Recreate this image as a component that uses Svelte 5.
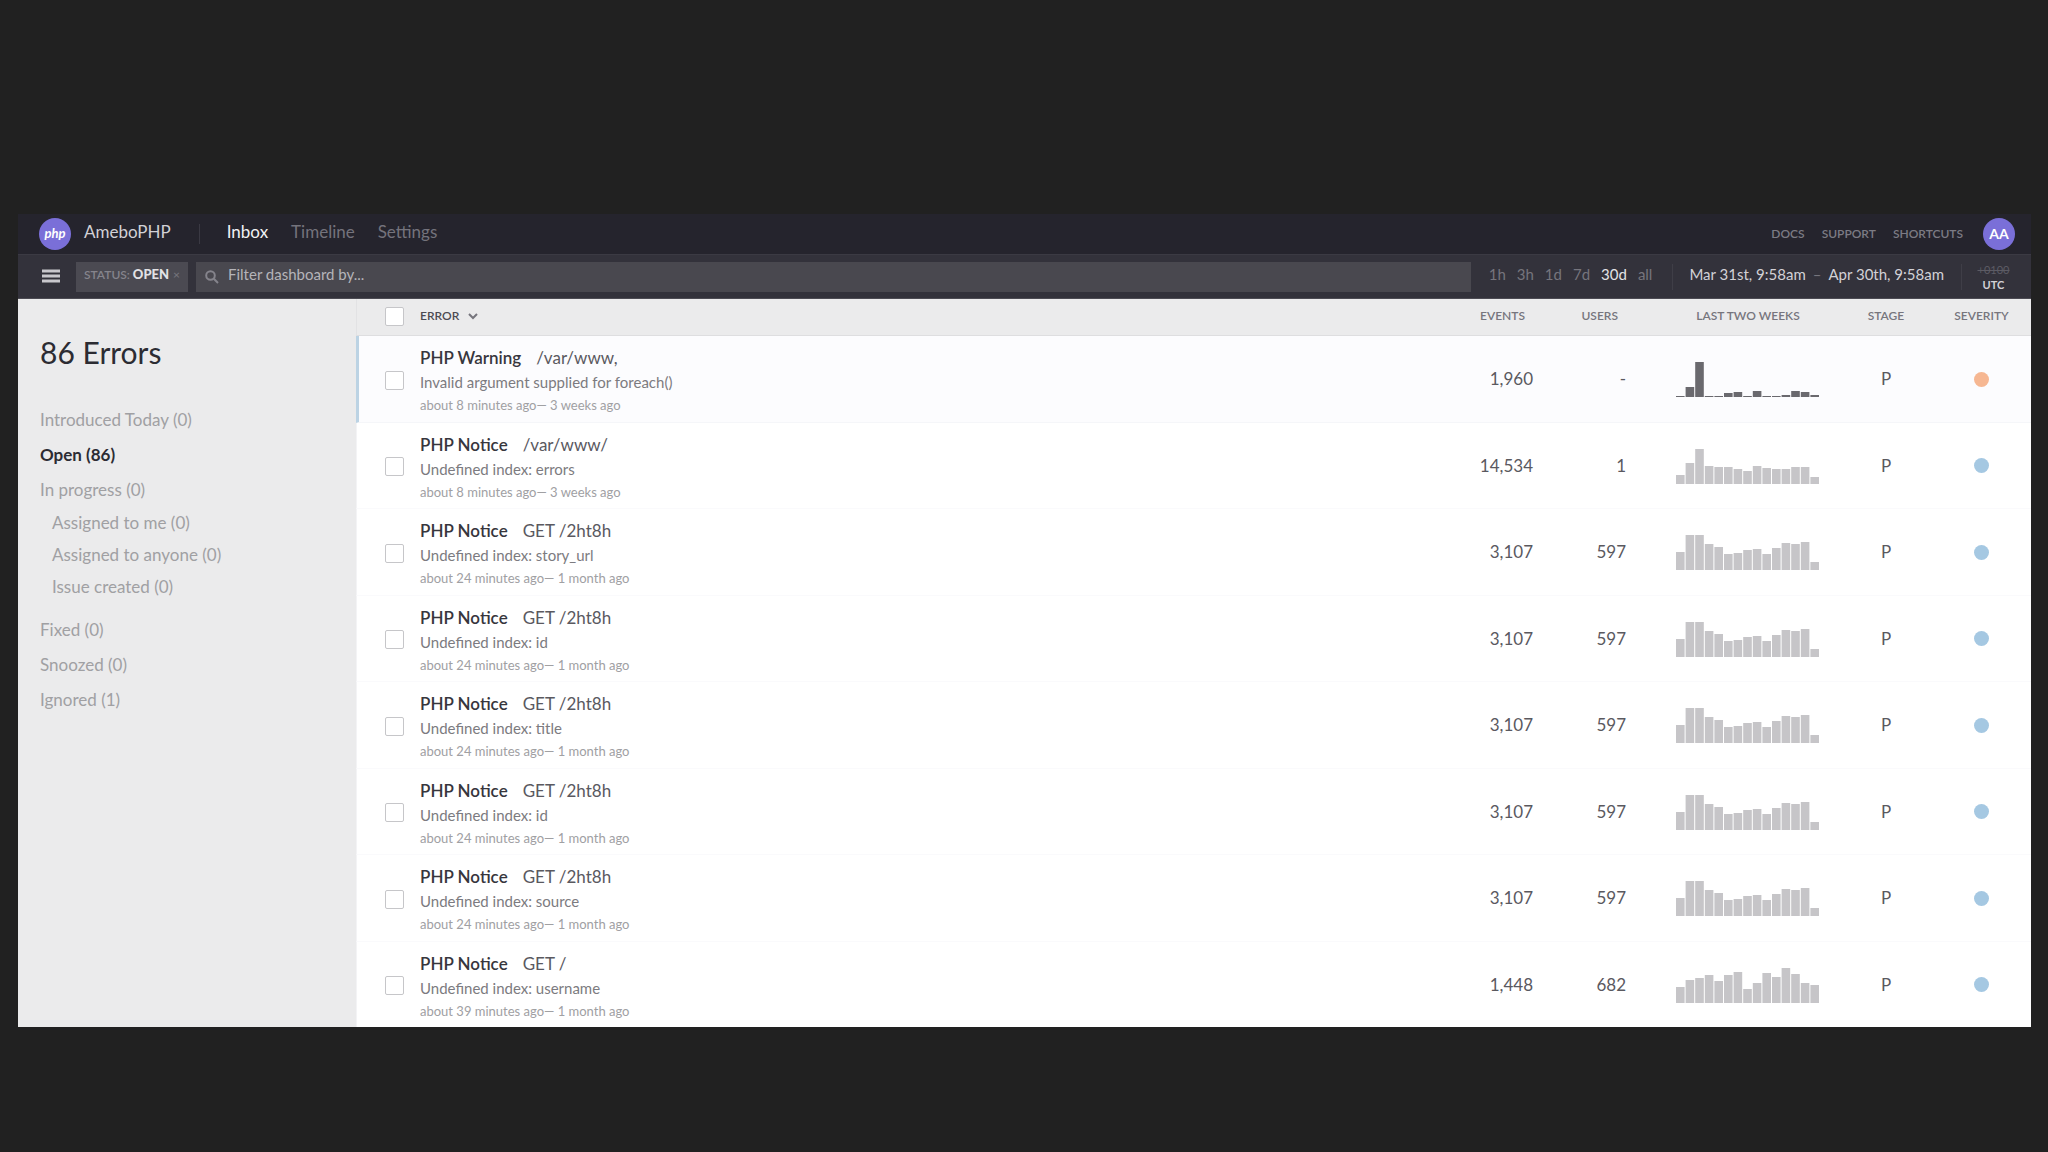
<script lang="ts">
	interface ErrorRow {
		kind: string;
		context: string;
		message: string;
		seen: string;
		events: string;
		users: string;
		bars: number[];
		severity: 'warning' | 'info';
		selected?: boolean;
	}

	const CHART_HEIGHT = 36;
	const BAR_STEP = 9.6;

	const shared = [18, 35, 35, 26, 23, 16, 17, 20, 21, 16, 22, 27, 26, 28, 8];

	const notice = (context: string, message: string, minutes: number): ErrorRow => ({
		kind: 'PHP Notice',
		context,
		message: `Undefined index: ${message}`,
		seen: `about ${minutes} minutes ago— 1 month ago`,
		events: '3,107',
		users: '597',
		bars: shared,
		severity: 'info'
	});

	const rows: ErrorRow[] = [
		{
			kind: 'PHP Warning',
			context: '/var/www,',
			message: 'Invalid argument supplied for foreach()',
			seen: 'about 8 minutes ago— 3 weeks ago',
			events: '1,960',
			users: '-',
			bars: [1, 10, 35, 1, 1, 4, 5, 1, 6, 1, 1, 2, 6, 5, 2],
			severity: 'warning',
			selected: true
		},
		{
			...notice('/var/www/', 'errors', 8),
			seen: 'about 8 minutes ago— 3 weeks ago',
			events: '14,534',
			users: '1',
			bars: [9, 21, 35, 18, 17, 17, 15, 13, 18, 16, 15, 15, 17, 17, 7]
		},
		notice('GET /2ht8h', 'story_url', 24),
		notice('GET /2ht8h', 'id', 24),
		notice('GET /2ht8h', 'title', 24),
		notice('GET /2ht8h', 'id', 24),
		notice('GET /2ht8h', 'source', 24),
		{
			...notice('GET /', 'username', 39),
			events: '1,448',
			users: '682',
			bars: [16, 23, 25, 28, 22, 28, 31, 14, 20, 30, 26, 35, 29, 20, 18]
		}
	];

	const ranges = ['1h', '3h', '1d', '7d', '30d', 'all'];
	let range = $state('30d');
	let filter = $state('');
</script>

{#snippet chart(bars: number[])}
	<svg class="chart" viewBox="0 0 144 36" aria-hidden="true">
		{#each bars as bar, i}
			<rect x={i * BAR_STEP} y={CHART_HEIGHT - bar} width="8.6" height={bar} />
		{/each}
	</svg>
{/snippet}

<div class="page">
	<div class="app">
		<header class="topbar">
			<a class="project" href="#project">
				<svg class="logo" viewBox="0 0 32 32" aria-hidden="true">
					<circle cx="16" cy="16" r="16" />
					<text x="16" y="20" text-anchor="middle">php</text>
				</svg>
				<span>AmeboPHP</span>
			</a>
			<nav class="tabs">
				<a class="active" href="#inbox">Inbox</a>
				<a href="#timeline">Timeline</a>
				<a href="#settings">Settings</a>
			</nav>
			<nav class="help">
				<a href="#docs">DOCS</a>
				<a href="#support">SUPPORT</a>
				<a href="#shortcuts">SHORTCUTS</a>
			</nav>
			<button class="avatar">AA</button>
		</header>

		<div class="toolbar">
			<button class="menu" aria-label="Menu">
				<svg viewBox="0 0 18 14"><path d="M0 2h18M0 7h18M0 12h18" /></svg>
			</button>
			<button class="chip">STATUS: <b>OPEN</b> <span class="remove">×</span></button>
			<label class="search">
				<svg viewBox="0 0 14 14" aria-hidden="true">
					<circle cx="5.5" cy="5.5" r="4.3" />
					<path d="M8.8 8.8 13 13" />
				</svg>
				<input type="text" placeholder="Filter dashboard by..." aria-label="Filter dashboard" bind:value={filter} />
			</label>
			<div class="ranges">
				{#each ranges as r}
					<button class:active={r === range} onclick={() => (range = r)}>{r}</button>
				{/each}
			</div>
			<div class="dates">
				<button>Mar 31st, 9:58am</button>
				<span>–</span>
				<button>Apr 30th, 9:58am</button>
			</div>
			<div class="zone">
				<button class="offset">+0100</button>
				<button class="current">UTC</button>
			</div>
		</div>

		<div class="body">
			<aside class="sidebar">
				<h1>86 Errors</h1>
				<ul>
					<li><a href="#today">Introduced Today (0)</a></li>
					<li><a class="active" href="#open">Open (86)</a></li>
					<li>
						<a href="#progress">In progress (0)</a>
						<ul>
							<li><a href="#me">Assigned to me (0)</a></li>
							<li><a href="#anyone">Assigned to anyone (0)</a></li>
							<li><a href="#issue">Issue created (0)</a></li>
						</ul>
					</li>
					<li><a href="#fixed">Fixed (0)</a></li>
					<li><a href="#snoozed">Snoozed (0)</a></li>
					<li><a href="#ignored">Ignored (1)</a></li>
				</ul>
			</aside>

			<main>
				<table>
					<thead>
						<tr>
							<th class="check"><input type="checkbox" aria-label="Select all errors" /></th>
							<th class="error">
								<button>
									ERROR
									<svg viewBox="0 0 10 7" aria-hidden="true"><path d="M1 1l4 4 4-4" /></svg>
								</button>
							</th>
							<th class="events">EVENTS</th>
							<th class="users">USERS</th>
							<th class="weeks">LAST TWO WEEKS</th>
							<th class="stage">STAGE</th>
							<th class="severity">SEVERITY</th>
						</tr>
					</thead>
					<tbody>
						{#each rows as row}
							<tr class:selected={row.selected}>
								<td class="check"><input type="checkbox" aria-label={row.message} /></td>
								<td class="error">
									<div class="title"><a href="#error">{row.kind}</a><span>{row.context}</span></div>
									<div class="message">{row.message}</div>
									<div class="seen">{row.seen}</div>
								</td>
								<td class="events">{row.events}</td>
								<td class="users">{row.users}</td>
								<td class="weeks">{@render chart(row.bars)}</td>
								<td class="stage">P</td>
								<td class="severity"><i class="dot {row.severity}"></i></td>
							</tr>
						{/each}
					</tbody>
				</table>
			</main>
		</div>
	</div>
</div>

<style>
	:global(body) {
		background: #212121;
	}

	.page {
		box-sizing: border-box;
		height: 100vh;
		padding: 214px 17px 125px 18px;
		display: flex;
		font-family: Lato, 'Liberation Sans', sans-serif;
		font-size: 16px;
		line-height: 20px;
	}

	.app {
		flex: 1;
		min-width: 0;
		display: flex;
		flex-direction: column;
		overflow: hidden;
	}

	a {
		color: inherit;
		text-decoration: none;
	}

	button {
		padding: 0;
		border: 0;
		background: none;
		color: inherit;
		font: inherit;
		cursor: pointer;
	}

	.topbar {
		flex: none;
		height: 40px;
		padding: 0 16px 0 21px;
		display: flex;
		align-items: center;
		background: #25242d;
		color: #74737c;
		font-size: 17px;
	}

	.project {
		display: flex;
		align-items: center;
		gap: 13px;
		height: 20px;
		padding-right: 28px;
		border-right: 1px solid #3a3943;
		color: #d2d1d6;
	}

	.project span,
	.tabs {
		padding-bottom: 4px;
	}

	.logo {
		width: 32px;
		height: 32px;
	}

	.logo circle {
		fill: #7a6fd8;
	}

	.logo text {
		fill: #fff;
		font-size: 13px;
		font-style: italic;
		font-weight: 700;
	}

	.tabs {
		display: flex;
		gap: 23px;
		margin-left: 27px;
	}

	.tabs .active {
		color: #f2f2f4;
	}

	.help {
		display: flex;
		gap: 17px;
		margin-left: auto;
		margin-right: 20px;
		font-size: 12px;
		font-weight: 600;
		color: #7c7b84;
	}

	.avatar {
		width: 32px;
		height: 32px;
		border-radius: 50%;
		background: #7a6fd8;
		color: #fff;
		font-size: 14px;
		font-weight: 700;
	}

	.toolbar {
		flex: none;
		box-sizing: border-box;
		height: 45px;
		padding-left: 24px;
		display: flex;
		align-items: center;
		background: #33323b;
		border-top: 1px solid #3b3a43;
		border-bottom: 1px solid #4c4b53;
		color: #76757d;
	}

	.menu {
		display: flex;
		padding-bottom: 2px;
		margin-right: 16px;
	}

	.menu svg {
		width: 18px;
		height: 14px;
		stroke: #c8c7cc;
		stroke-width: 3;
	}

	.chip {
		height: 30px;
		padding: 0 8px 4px;
		margin-right: 8px;
		background: #4b4a52;
		color: #85848c;
		font-size: 12px;
		font-weight: 600;
		white-space: nowrap;
	}

	.chip b {
		color: #e2e2e5;
		font-size: 13px;
	}

	.chip .remove {
		margin-left: 1px;
		color: #74737b;
	}

	.search {
		flex: 1;
		box-sizing: border-box;
		height: 30px;
		padding: 0 9px;
		display: flex;
		align-items: center;
		gap: 9px;
		background: #49484f;
	}

	.search svg {
		width: 14px;
		height: 14px;
		fill: none;
		stroke: #85848c;
		stroke-width: 2;
	}

	.search input {
		flex: 1;
		padding: 0 0 6px;
		border: 0;
		outline: 0;
		background: none;
		color: #e2e2e5;
		font: inherit;
		font-size: 15px;
	}

	.search input::placeholder {
		color: #b5b4b9;
	}

	.ranges,
	.dates {
		display: flex;
		padding-bottom: 6px;
		font-size: 15px;
	}

	.ranges {
		gap: 11px;
		padding-left: 18px;
		padding-right: 20px;
	}

	.ranges .active {
		color: #e2e2e5;
	}

	.dates {
		gap: 7px;
		padding-left: 16px;
		padding-right: 17px;
		border-left: 1px solid #3f3e47;
		border-right: 1px solid #3f3e47;
		color: #d2d1d6;
	}

	.dates span {
		color: #76757d;
	}

	.zone {
		width: 69px;
		padding-right: 6px;
		display: flex;
		flex-direction: column;
		align-items: center;
		box-sizing: border-box;
		color: #d2d1d6;
		font-size: 11px;
		line-height: 15px;
	}

	.current {
		font-weight: 700;
	}

	.offset {
		color: #5c5b64;
		text-decoration: line-through;
	}

	.body {
		flex: 1;
		min-height: 0;
		display: flex;
		background: #fff;
	}

	.sidebar {
		flex: none;
		box-sizing: border-box;
		width: 338px;
		padding: 33px 22px;
		background: #ebebec;
		color: #a0a0a3;
		font-size: 17px;
	}

	h1 {
		margin: 0 0 38px;
		color: #2c2c33;
		font-size: 30px;
		font-weight: 400;
		line-height: 40px;
	}

	ul {
		display: flex;
		flex-direction: column;
		gap: 15px;
		margin: 0;
		padding: 0;
		list-style: none;
	}

	.sidebar .active {
		color: #2c2c33;
		font-weight: 700;
	}

	ul ul {
		gap: 12px;
		padding: 13px 0 8px 12px;
	}

	main {
		flex: 1;
		min-width: 0;
	}

	table {
		width: 100%;
		table-layout: fixed;
		border-collapse: separate;
		border-spacing: 0;
	}

	th,
	td {
		box-sizing: border-box;
		padding: 0;
		font-weight: 400;
		text-align: center;
	}

	th {
		height: 37px;
		padding-bottom: 3px;
		background: #ebebec;
		border-bottom: 1px solid #dedee0;
		color: #76757d;
		font-size: 12px;
		font-weight: 600;
	}

	tbody tr {
		height: 87px;
	}

	tbody tr:nth-child(even) {
		height: 86px;
	}

	td {
		border-bottom: 1px solid #fafafc;
		color: #5a595f;
		font-size: 17px;
	}

	.selected td {
		background: #fcfcfe;
		border-bottom-color: #f5f6f9;
	}

	.check {
		width: 64px;
		padding-left: 28px;
		border-left: 1px solid #e2e2e4;
		text-align: left;
	}

	td.check {
		padding-top: 2px;
		border-left-color: #f3f3f5;
	}

	.selected td.check {
		padding-left: 26px;
		border-left: 3px solid #bcd3e4;
	}

	.check input {
		appearance: none;
		display: block;
		width: 19px;
		height: 19px;
		margin: 0;
		border: 1px solid #c6c6c9;
		border-radius: 2px;
		background: #fff;
	}

	th.check {
		padding-bottom: 1px;
	}

	.error {
		text-align: left;
	}

	td.error {
		padding-top: 5px;
	}

	th.error {
		color: #4b4a52;
	}

	th.error svg {
		width: 10px;
		height: 7px;
		margin-left: 6px;
		fill: none;
		stroke: #76757d;
		stroke-width: 2;
	}

	.title {
		display: flex;
		gap: 15px;
		line-height: 24px;
	}

	.title a {
		color: #37363d;
		font-weight: 600;
	}

	.message {
		color: #7c7b80;
		font-size: 15px;
		line-height: 24px;
	}

	.seen {
		color: #a0a0a3;
		font-size: 13px;
		line-height: 23px;
	}

	.events {
		width: 114px;
		text-align: right;
	}

	.users {
		width: 93px;
		text-align: right;
	}

	th.events,
	th.users {
		padding-right: 8px;
	}

	.weeks {
		width: 214px;
		padding-left: 30px;
	}

	.chart {
		display: inline-block;
		width: 144px;
		height: 36px;
		fill: #c6c5c8;
		vertical-align: middle;
	}

	.selected .chart {
		fill: #6a696e;
	}

	.stage {
		width: 92px;
	}

	.severity {
		width: 99px;
	}

	.dot {
		display: block;
		width: 15px;
		height: 15px;
		margin: 0 auto;
		border-radius: 50%;
	}

	.dot.warning {
		background: #f6b792;
	}

	.dot.info {
		background: #a5c8e2;
	}
</style>
